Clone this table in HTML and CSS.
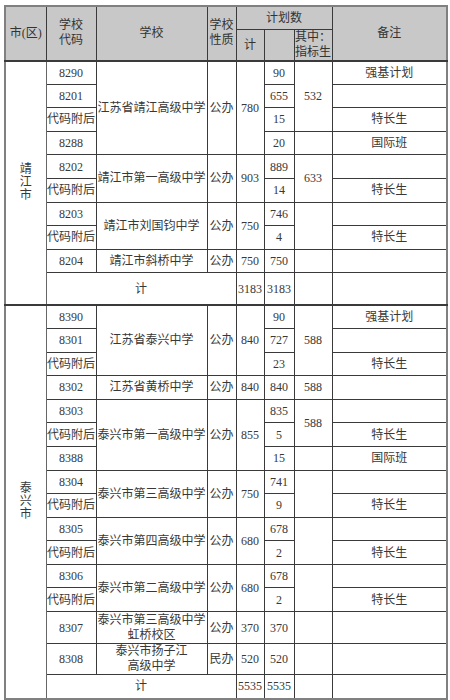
FILE: index.html
```html
<!DOCTYPE html>
<html lang="zh-CN">
<head>
<meta charset="utf-8">
<title>招生计划</title>
<link rel="stylesheet" href="styles.css">
</head>
<body>
<div class="page">
<table class="plan">
<colgroup>
<col class="c1"><col class="c2"><col class="c3"><col class="c4"><col class="c5"><col class="c6"><col class="c7"><col class="c8">
</colgroup>
<thead>
<tr class="h1">
<th rowspan="2">市(区)</th>
<th rowspan="2" class="two">学校<br>代码</th>
<th rowspan="2">学校</th>
<th rowspan="2" class="two">学校<br>性质</th>
<th colspan="3">计划数</th>
<th rowspan="2">备注</th>
</tr>
<tr class="h2">
<th>计</th>
<th></th>
<th class="two">其中：<br>指标生</th>
</tr>
</thead>
<tbody class="sec">
<tr class="r">
<td rowspan="10" class="city">靖<br>江<br>市</td>
<td>8290</td>
<td rowspan="4">江苏省靖江高级中学</td>
<td rowspan="4">公办</td>
<td rowspan="4">780</td>
<td>90</td>
<td rowspan="3">532</td>
<td>强基计划</td>
</tr>
<tr class="r"><td>8201</td><td>655</td><td></td></tr>
<tr class="r"><td>代码附后</td><td>15</td><td>特长生</td></tr>
<tr class="r"><td>8288</td><td>20</td><td></td><td>国际班</td></tr>
<tr class="r">
<td>8202</td>
<td rowspan="2">靖江市第一高级中学</td>
<td rowspan="2">公办</td>
<td rowspan="2">903</td>
<td>889</td>
<td rowspan="2">633</td>
<td></td>
</tr>
<tr class="r"><td>代码附后</td><td>14</td><td>特长生</td></tr>
<tr class="r">
<td>8203</td>
<td rowspan="2">靖江市刘国钧中学</td>
<td rowspan="2">公办</td>
<td rowspan="2">750</td>
<td>746</td>
<td rowspan="2"></td>
<td></td>
</tr>
<tr class="r"><td>代码附后</td><td>4</td><td>特长生</td></tr>
<tr class="r"><td>8204</td><td>靖江市斜桥中学</td><td>公办</td><td>750</td><td>750</td><td></td><td></td></tr>
<tr class="tot1"><td colspan="3">计</td><td>3183</td><td>3183</td><td></td><td></td></tr>
</tbody>
<tbody class="sec">
<tr class="r">
<td rowspan="16" class="city">泰<br>兴<br>市</td>
<td>8390</td>
<td rowspan="3">江苏省泰兴中学</td>
<td rowspan="3">公办</td>
<td rowspan="3">840</td>
<td>90</td>
<td rowspan="3">588</td>
<td>强基计划</td>
</tr>
<tr class="r"><td>8301</td><td>727</td><td></td></tr>
<tr class="r"><td>代码附后</td><td>23</td><td>特长生</td></tr>
<tr class="r"><td>8302</td><td>江苏省黄桥中学</td><td>公办</td><td>840</td><td>840</td><td>588</td><td></td></tr>
<tr class="r">
<td>8303</td>
<td rowspan="3">泰兴市第一高级中学</td>
<td rowspan="3">公办</td>
<td rowspan="3">855</td>
<td>835</td>
<td rowspan="2">588</td>
<td></td>
</tr>
<tr class="r"><td>代码附后</td><td>5</td><td>特长生</td></tr>
<tr class="r"><td>8388</td><td>15</td><td></td><td>国际班</td></tr>
<tr class="r">
<td>8304</td>
<td rowspan="2">泰兴市第三高级中学</td>
<td rowspan="2">公办</td>
<td rowspan="2">750</td>
<td>741</td>
<td rowspan="2"></td>
<td></td>
</tr>
<tr class="r"><td>代码附后</td><td>9</td><td>特长生</td></tr>
<tr class="r">
<td>8305</td>
<td rowspan="2">泰兴市第四高级中学</td>
<td rowspan="2">公办</td>
<td rowspan="2">680</td>
<td>678</td>
<td rowspan="2"></td>
<td></td>
</tr>
<tr class="r"><td>代码附后</td><td>2</td><td>特长生</td></tr>
<tr class="r">
<td>8306</td>
<td rowspan="2">泰兴市第二高级中学</td>
<td rowspan="2">公办</td>
<td rowspan="2">680</td>
<td>678</td>
<td rowspan="2"></td>
<td></td>
</tr>
<tr class="r"><td>代码附后</td><td>2</td><td>特长生</td></tr>
<tr class="tall1"><td>8307</td><td class="two">泰兴市第三高级中学<br>虹桥校区</td><td>公办</td><td>370</td><td>370</td><td></td><td></td></tr>
<tr class="tall2"><td>8308</td><td class="two">泰兴市扬子江<br>高级中学</td><td>民办</td><td>520</td><td>520</td><td></td><td></td></tr>
<tr class="tot2"><td colspan="3">计</td><td>5535</td><td>5535</td><td></td><td></td></tr>
</tbody>
</table>
</div>
</body>
</html>
```
FILE: styles.css
```css
html, body {
  margin: 0;
  padding: 0;
  background: #ffffff;
}
.page {
  padding: 5px 4px 0 4px;
}
.plan {
  width: 442px;
  table-layout: fixed;
  border-collapse: collapse;
  border: 2px solid #808080;
  font-family: "Liberation Serif", "Noto Sans CJK SC", serif;
  font-size: 12px;
  color: #383838;
}
.c1 { width: 41px; }
.c2 { width: 50px; }
.c3 { width: 111px; }
.c4 { width: 29px; }
.c5 { width: 28px; }
.c6 { width: 30px; }
.c7 { width: 38px; }
.c8 { width: 115px; }
.plan th,
.plan td {
  border: 1px solid #3a3a3a;
  padding: 0;
  text-align: center;
  vertical-align: middle;
  white-space: nowrap;
  overflow: hidden;
  line-height: 14px;
}
.plan th {
  background: #c8c8c8;
  font-weight: normal;
  color: #333333;
}
.plan .two {
  line-height: 15px;
}
.h1 { height: 23px; }
.h2 { height: 31px; }
.r { height: 23.6px; }
.tot1 { height: 32px; }
.tall1 { height: 32px; }
.tall2 { height: 31px; }
.tot2 { height: 24px; }
.plan td.city {
  line-height: 13px;
  border-right-color: #666666;
}
.sec {
  border-top: 2px solid #3a3a3a;
}
```
